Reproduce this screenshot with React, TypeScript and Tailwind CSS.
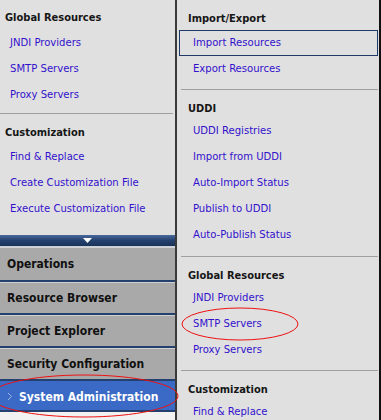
import React from 'react';

interface Section {
  title: string;
  links: string[];
}

const leftSections: Section[] = [
  { title: 'Global Resources', links: ['JNDI Providers', 'SMTP Servers', 'Proxy Servers'] },
  { title: 'Customization', links: ['Find & Replace', 'Create Customization File', 'Execute Customization File'] },
];

const rightSections: Section[] = [
  { title: 'Import/Export', links: ['Import Resources', 'Export Resources'] },
  { title: 'UDDI', links: ['UDDI Registries', 'Import from UDDI', 'Auto-Import Status', 'Publish to UDDI', 'Auto-Publish Status'] },
  { title: 'Global Resources', links: ['JNDI Providers', 'SMTP Servers', 'Proxy Servers'] },
  { title: 'Customization', links: ['Find & Replace'] },
];

const navButtons = ['Operations', 'Resource Browser', 'Project Explorer', 'Security Configuration'];

const font = "font-['DejaVu_Sans_Condensed','DejaVu_Sans',sans-serif] font-stretch-condensed";

const App: React.FC = () => {
  return (
    <div className={`relative w-[381px] h-[420px] overflow-hidden flex bg-[#e0e0e0] ${font}`}>
      {/* left accordion panel */}
      <div className="w-[177px] h-full flex flex-col border-r-2 border-[#3a3a3a]">
        <div className="pt-[7px] pb-[6px] border-b border-[#a0a0a0] mr-[2px]">
          <div className="h-[22px] flex items-center pl-[5px] text-[11px] font-bold text-[#161616]">{leftSections[0].title}</div>
          {leftSections[0].links.map((l) => (
            <div key={l} className="h-[26px] flex items-center pl-[10px] pt-[2px] text-[11.2px] text-[#3311cc]">{l}</div>
          ))}
        </div>
        <div className="pt-[8px]">
          <div className="h-[22px] flex items-center pl-[5px] pt-[1px] text-[11px] font-bold text-[#161616]">{leftSections[1].title}</div>
          {leftSections[1].links.map((l) => (
            <div key={l} className="h-[26px] flex items-center pl-[10px] pt-[1px] text-[11.2px] text-[#3311cc]">{l}</div>
          ))}
        </div>
        <div className="flex-1" />
        <div className="h-[12px] flex items-center justify-center bg-gradient-to-b from-[#4a6a9c] via-[#23406e] to-[#1b3358] border-b border-[#c8d0dc]">
          <svg width="9" height="5" viewBox="0 0 9 5">
            <path d="M0 0 L9 0 L4.5 5 Z" fill="#ffffff" />
          </svg>
        </div>
        {navButtons.map((b, i) => (
          <div
            key={b}
            className={`h-[33px] flex items-center pl-[7px] text-[12px] font-bold text-[#101010] bg-[#a9a9a9] ${i === 0 ? 'border-t border-[#d4d4d4]' : 'border-t-2 border-[#23406e] shadow-[inset_0_1px_0_#d0d0d0]'}`}
          >
            {b}
          </div>
        ))}
        <div className="h-[33px] flex items-center pl-[7px] pt-[2px] gap-[6px] text-[12px] font-bold text-white bg-[#3a6ac6] border-t-2 border-[#23406e] border-b-2">
          <svg width="6" height="9" viewBox="0 0 6 9">
            <path d="M1 1 L4.5 4.5 L1 8" fill="none" stroke="#9fb6e0" strokeWidth="1" />
          </svg>
          <span>System Administration</span>
        </div>
        <div className="flex-1 max-h-[8px] bg-[#f2f2f2]" />
      </div>

      {/* right flyout menu */}
      <div className="flex-1 h-full flex flex-col border-r-2 border-[#111] pl-[2px]">
        {rightSections.map((s, si) => (
          <div key={s.title} className={si === 0 ? 'pt-[8px]' : 'pt-[7px]'}>
            <div className={`${si === 0 ? 'h-[22px]' : 'h-[21px] pt-[4px]'} flex items-center pl-[9px] text-[11px] font-bold text-[#161616]`}>{s.title}</div>
            {s.links.map((l, li) => (
              <div
                key={l}
                className={`h-[26px] flex items-center text-[11.2px] text-[#3311cc] mr-[1px] ${si === 0 && li === 0 ? 'border border-[#1f3a66] pl-[13px]' : 'pl-[14px] pt-[1px]'}`}
              >
                {l}
              </div>
            ))}
            {si < rightSections.length - 1 && (
              <div className={`${si === 0 ? 'h-[7px]' : si === 1 ? 'h-[8px]' : 'h-[7px]'} border-b border-[#a0a0a0] ml-[2px] mr-[1px] box-content`} />
            )}
          </div>
        ))}
      </div>

      {/* red annotation ellipses */}
      <svg className="absolute left-0 top-0 pointer-events-none" width="381" height="420" viewBox="0 0 381 420">
        <ellipse cx="84" cy="396" rx="94" ry="21" fill="none" stroke="#ee1111" strokeWidth="1" />
        <ellipse cx="240" cy="324" rx="58" ry="16" fill="none" stroke="#ee1111" strokeWidth="1" />
      </svg>
    </div>
  );
};

export default App;
